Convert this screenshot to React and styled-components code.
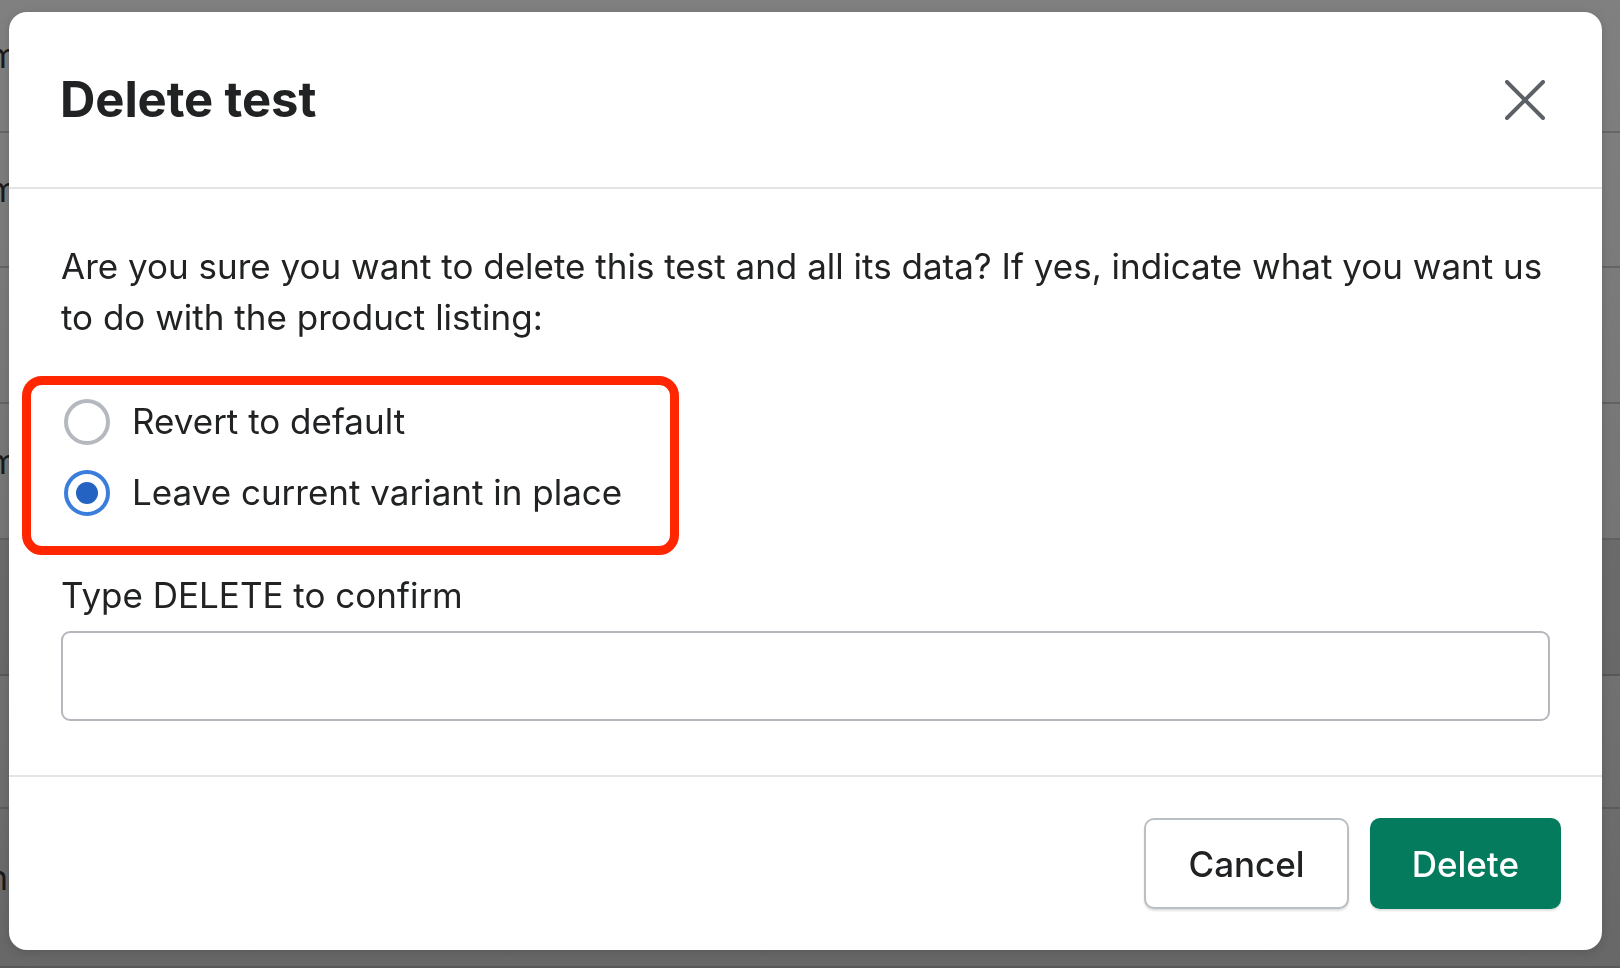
import React, { useState } from "react";
import styled, { createGlobalStyle } from "styled-components";

const GlobalStyle = createGlobalStyle`
  * { box-sizing: border-box; }
  html, body { margin: 0; padding: 0; height: 100%; }
  body {
    font-family: Inter, "Noto Sans", "Liberation Sans", sans-serif;
    background: linear-gradient(180deg, #808080 0%, #747474 60%, #676767 100%);
    overflow: hidden;
  }
`;

const rows = [
  { h: 133, glyph: "m" },
  { h: 135, glyph: "m" },
  { h: 136, glyph: "" },
  { h: 136, glyph: "m" },
  { h: 136, glyph: "", dark: true },
  { h: 133, glyph: "" },
  { h: 159, glyph: "n" },
];

const App = () => {
  const [choice, setChoice] = useState("leave");
  const [confirmText, setConfirmText] = useState("");

  return (
    <>
      <GlobalStyle />
      <PageBehind>
        {rows.map((r, i) => (
          <BgRow key={i} $h={r.h} $dark={r.dark}>
            <BgGlyph>{r.glyph}</BgGlyph>
          </BgRow>
        ))}
      </PageBehind>

      <Overlay>
        <Modal>
          <Header>
            <Title>Delete test</Title>
            <CloseButton aria-label="Close">
              <svg width="40" height="40" viewBox="0 0 40 40" fill="none">
                <path
                  d="M2 2 L38 38 M38 2 L2 38"
                  stroke="#5c6168"
                  strokeWidth="4"
                  strokeLinecap="round"
                />
              </svg>
            </CloseButton>
          </Header>

          <Body>
            <Text>
              Are you sure you want to delete this test and all its data? If yes,
              indicate what you want us to do with the product listing:
            </Text>

            <Highlight>
              <Option onClick={() => setChoice("revert")}>
                <Radio $checked={choice === "revert"} />
                <OptionLabel>Revert to default</OptionLabel>
              </Option>
              <Option onClick={() => setChoice("leave")}>
                <Radio $checked={choice === "leave"} />
                <OptionLabel>Leave current variant in place</OptionLabel>
              </Option>
            </Highlight>

            <FieldLabel>Type DELETE to confirm</FieldLabel>
            <Input
              value={confirmText}
              onChange={(e) => setConfirmText(e.target.value)}
            />
          </Body>

          <Footer>
            <Button>Cancel</Button>
            <Button primary>Delete</Button>
          </Footer>
        </Modal>
      </Overlay>
    </>
  );
};

const PageBehind = styled.div`
  display: flex;
  flex-direction: column;
  height: 100vh;
`;

const BgRow = styled.div`
  height: ${({ $h }) => $h}px;
  flex-shrink: 0;
  display: flex;
  align-items: center;
  border-bottom: 2px solid rgba(60, 60, 60, 0.35);
  background: ${({ $dark }) => ($dark ? "rgba(40, 42, 50, 0.12)" : "transparent")};
`;

const BgGlyph = styled.span`
  font-size: 34px;
  color: #1a1a1a;
  margin-left: -12px;
  margin-top: -20px;
`;

const Overlay = styled.div`
  position: fixed;
  inset: 0;
  padding: 12px 18px 18px 9px;
  display: flex;
`;

const Modal = styled.div`
  flex: 1;
  display: flex;
  flex-direction: column;
  background: #ffffff;
  border-radius: 18px;
  box-shadow: 0 2px 10px rgba(0, 0, 0, 0.15);
  overflow: hidden;
`;

const Header = styled.div`
  height: 177px;
  flex-shrink: 0;
  display: flex;
  align-items: center;
  justify-content: space-between;
  padding: 0 57px 0 51px;
  border-bottom: 2px solid #e3e4e6;
`;

const Title = styled.h1`
  margin: 0;
  font-size: 49px;
  font-weight: 700;
  color: #202223;
  letter-spacing: -0.1px;
`;

const CloseButton = styled.button`
  border: none;
  background: none;
  padding: 0;
  width: 40px;
  height: 40px;
  display: flex;
  cursor: pointer;
`;

const Body = styled.div`
  flex: 1;
  display: flex;
  flex-direction: column;
  padding: 52px 52px 0 52px;
`;

const Text = styled.p`
  margin: 0;
  font-size: 35px;
  line-height: 51px;
  color: #202223;
`;

const Highlight = styled.div`
  margin: 33px 0 0 -39px;
  width: 657px;
  height: 179px;
  border: 9px solid #ff2600;
  border-radius: 20px;
  padding: 1px 0 0 33px;
  display: flex;
  flex-direction: column;
`;

const Option = styled.label`
  height: 71px;
  display: flex;
  align-items: center;
  gap: 22px;
  cursor: pointer;
`;

const Radio = styled.span`
  width: 46px;
  height: 46px;
  border-radius: 50%;
  flex-shrink: 0;
  border: 4px solid ${({ $checked }) => ($checked ? "#3a7ddb" : "#b5b9bf")};
  display: flex;
  align-items: center;
  justify-content: center;
  &::after {
    content: "";
    width: 22px;
    height: 22px;
    border-radius: 50%;
    background: #2463c2;
    display: ${({ $checked }) => ($checked ? "block" : "none")};
  }
`;

const OptionLabel = styled.span`
  font-size: 35px;
  line-height: 51px;
  color: #202223;
`;

const FieldLabel = styled.div`
  margin-top: 15px;
  font-size: 35px;
  line-height: 51px;
  color: #202223;
`;

const Input = styled.input`
  margin-top: 10px;
  height: 90px;
  width: 100%;
  border: 2px solid #b4b8bd;
  border-radius: 9px;
  padding: 0 20px;
  font-family: inherit;
  font-size: 35px;
  outline: none;
`;

const Footer = styled.div`
  height: 175px;
  flex-shrink: 0;
  display: flex;
  align-items: center;
  justify-content: flex-end;
  gap: 21px;
  padding: 0 41px;
  border-top: 2px solid #e3e4e6;
`;

const Button = styled.button`
  height: 91px;
  padding: 0 42px;
  border-radius: 10px;
  font-family: inherit;
  font-size: 35px;
  font-weight: 500;
  cursor: pointer;
  color: ${({ primary }) => (primary ? "#ffffff" : "#202223")};
  background: ${({ primary }) => (primary ? "#047b5d" : "#ffffff")};
  border: ${({ primary }) => (primary ? "none" : "2px solid #babfc4")};
  box-shadow: 0 2px 2px rgba(0, 0, 0, 0.12);
`;

export default App;
